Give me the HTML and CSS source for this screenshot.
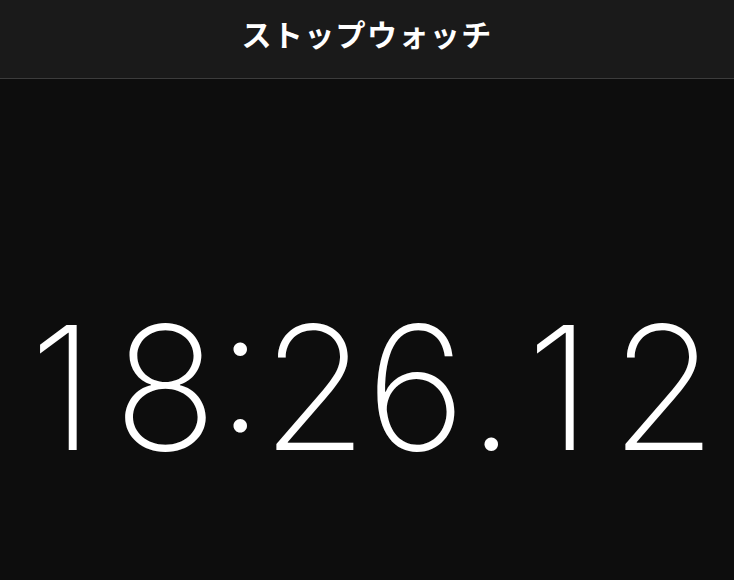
FILE: index.html
```html
<!DOCTYPE html>
<html lang="ja">
<head>
<meta charset="utf-8">
<link rel="stylesheet" href="styles.css">
</head>
<body>
<div class="app">
  <header class="nav">
    <h1 class="title">ストップウォッチ</h1>
  </header>
  <main class="face">
    <div class="time"><span class="d">1</span><span class="d">8</span><span class="sep">:</span><span class="d">2</span><span class="d">6</span><span class="dot">.</span><span class="d">1</span><span class="d">2</span></div>
  </main>
</div>
</body>
</html>
```
FILE: styles.css
```css
html, body {
  margin: 0;
  padding: 0;
  background: #0d0d0d;
}
.app {
  width: 734px;
  height: 580px;
  display: flex;
  flex-direction: column;
  overflow: hidden;
}
.nav {
  height: 78px;
  background: #1a1a1a;
  border-bottom: 1px solid #3c3c3c;
  display: flex;
  align-items: center;
  justify-content: center;
  flex-shrink: 0;
}
.title {
  margin: 0;
  color: #ffffff;
  font-family: "Noto Sans CJK JP", "Noto Sans", sans-serif;
  font-weight: 700;
  font-size: 30px;
  letter-spacing: 1.4px;
  line-height: 1;
  padding-bottom: 12px;
}
.face {
  flex: 1;
  display: flex;
  justify-content: center;
  padding-top: 222px;
  padding-right: 10px;
}
.time {
  display: flex;
  color: #ffffff;
  font-family: "Inter", sans-serif;
  font-weight: 180;
  font-size: 172px;
  line-height: 1;
  font-feature-settings: "case" 1;
}
.d, .sep, .dot {
  display: block;
  text-align: center;
}
.d { width: 103px; }
.sep { width: 45px; }
.dot { width: 40px; }
```
